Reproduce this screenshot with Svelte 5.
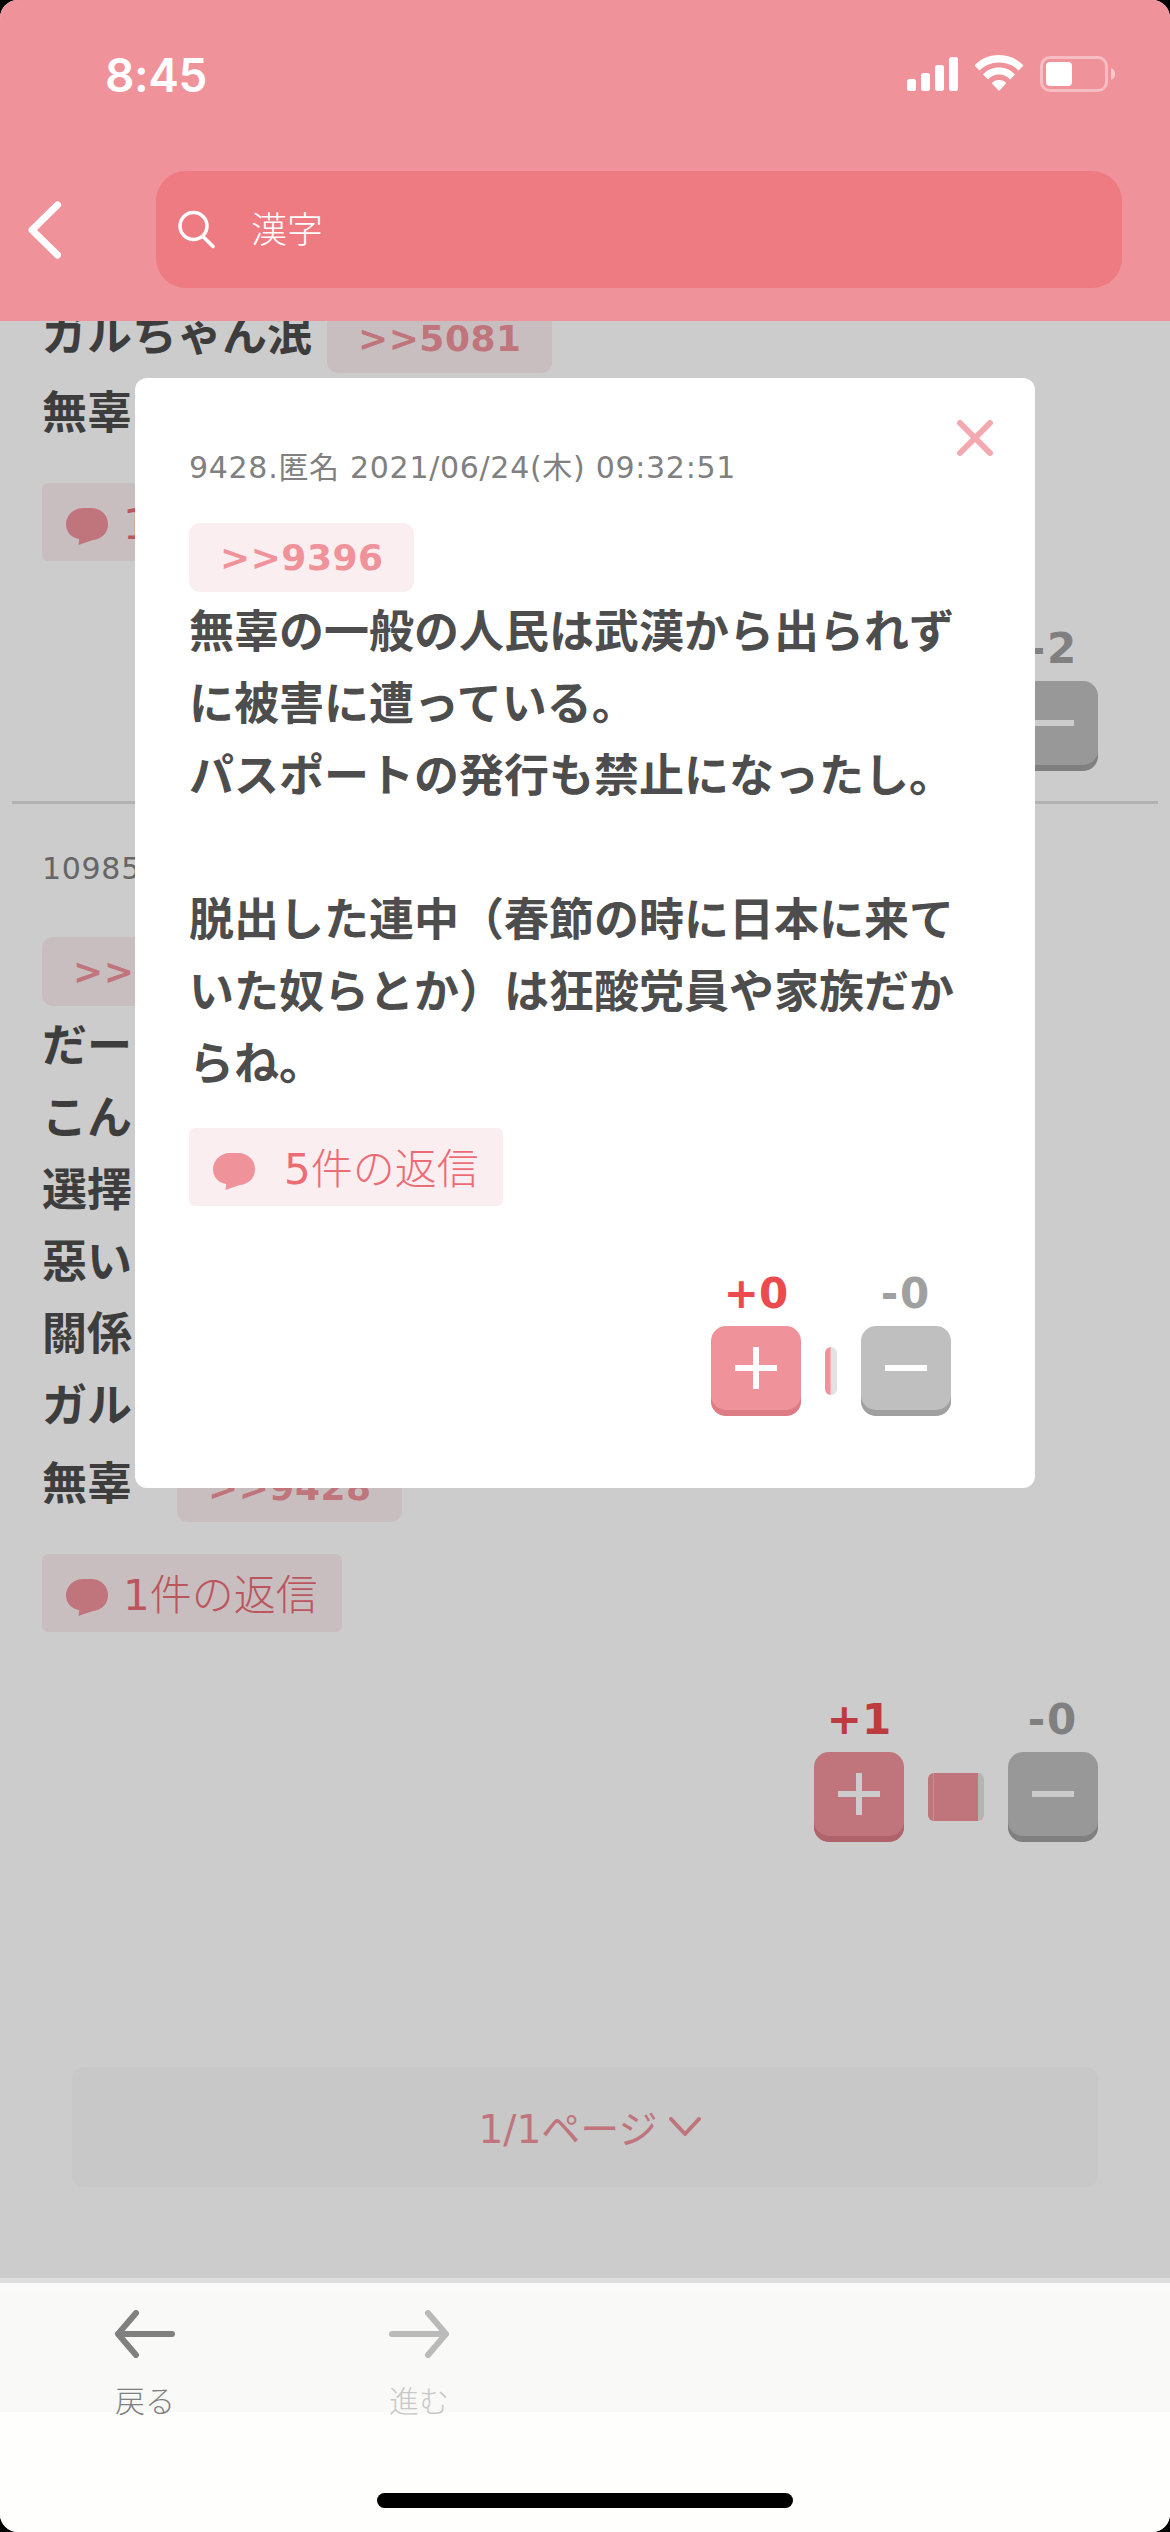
<script>
  let modalOpen = true;

  const comments = [
    {
      lines: [
        { text: 'ガルちゃん泯', tag: '>>5081' },
        { text: '無辜', tagged: true },
      ],
      replies: 1,
      votes: { minus: 2 },
    },
    {
      meta: '10985',
      anchor: '>>',
      lines: [
        { text: 'だー' },
        { text: 'こん' },
        { text: '選擇' },
        { text: '惡い' },
        { text: '關係' },
        { text: 'ガル' },
        { text: '無辜', tag: '>>9428', wide: true },
      ],
      replies: 1,
      votes: { plus: 1, minus: 0, bar: 45 },
    },
  ];

  const selected = {
    meta: '9428.匿名 2021/06/24(木) 09:32:51',
    anchor: '>>9396',
    lines: [
      { text: '無辜の一般の人民は武漢から出られず' },
      { text: 'に被害に遭っている。' },
      { text: 'パスポートの発行も禁止になったし。' },
      { text: '' },
      { text: '脱出した連中（春節の時に日本に来て' },
      { text: 'いた奴らとか）は狂酸党員や家族だか' },
      { text: 'らね。' },
    ],
    replies: 5,
    votes: { plus: 0, minus: 0, bar: 1 },
  };
</script>

{#snippet commentBody(comment)}
  {#if comment.meta}
    <div class="meta">{comment.meta}</div>
  {/if}
  {#if comment.anchor}
    <div class="tag">{comment.anchor}</div>
  {/if}
  <div class="text">
    {#each comment.lines as line}
      <div class="line" class:tagged={line.tag || line.tagged}>
        <span>{line.text}</span>
        {#if line.tag}
          <span class="tag {line.wide ? 'wide' : ''}">{line.tag}</span>
        {/if}
      </div>
    {/each}
  </div>
  <button class="replies">
    <svg width="42" height="37" viewBox="0 0 42 37" fill="currentColor">
      <path d="M17 0h8C35 0 42 7 42 16S36 31 27 32c-5 1.500-10 3.500-14.500 5l.7-6C5 29.500 0 24 0 16S7 0 17 0z"/>
    </svg>
    <span class="label"><b>{comment.replies}</b>件の返信</span>
  </button>
  <div class="votes">
    {#if comment.votes.plus !== undefined}
      <div class="vote plus">
        <div class="count">+{comment.votes.plus}</div>
        <button class="vote-btn">
          <svg width="42" height="42" viewBox="0 0 42 42" fill="#fff">
            <rect x="0" y="18" width="42" height="6"/><rect x="18" y="0" width="6" height="42"/>
          </svg>
        </button>
      </div>
      <div class="ratio">
        <div class="ratio-start"></div>
        <div class="ratio-fill" style="width: {comment.votes.bar}px"></div>
        <div class="ratio-end"></div>
      </div>
    {/if}
    <div class="vote minus">
      <div class="count">-{comment.votes.minus}</div>
      <button class="vote-btn">
        <svg width="42" height="42" viewBox="0 0 42 42" fill="#fff">
          <rect x="0" y="18" width="42" height="6"/>
        </svg>
      </button>
    </div>
  </div>
{/snippet}

<div class="screen">
  <!-- Header -->
  <header>
    <div class="status-bar">
      <div class="time">8:45</div>
      <div class="status-icons">
        <svg width="51" height="34" viewBox="0 0 51 34" fill="#fff">
          <rect x="0" y="22" width="9" height="12" rx="2.500"/><rect x="14" y="16" width="9" height="18" rx="2.500"/>
          <rect x="28" y="8" width="9" height="26" rx="2.500"/><rect x="42" y="0" width="9" height="34" rx="2.500"/>
        </svg>
        <svg class="wifi" width="50" height="36" viewBox="0 0 50 36" fill="#fff">
          <path d="M25 0C35 0 43.500 4 49.500 10.500L44.500 15.500C39.500 10.500 33 7.500 25 7.500S10.500 10.500 5.500 15.500L.5 10.500C6.500 4 15 0 25 0z"/>
          <path d="M25 12.500c6.500 0 12 2.600 16 7l-5 5c-3-3.200-6.600-5-11-5s-8 1.800-11 5l-5-5c4-4.400 9.500-7 16-7z"/>
          <path d="M25 25c3 0 5.500 1.200 7.200 3.200L25 36l-7.200-7.800C19.500 26.200 22 25 25 25z"/>
        </svg>
        <svg width="76" height="36" viewBox="0 0 76 36">
          <rect x="1.500" y="1.500" width="65" height="33" rx="8.500" fill="none" stroke="#fff" stroke-opacity=".4" stroke-width="3"/>
          <rect x="6" y="6" width="26" height="24" rx="4" fill="#fff"/>
          <path d="M71 12c2.700 1.200 4.200 3.400 4.200 6s-1.500 4.800-4.200 6z" fill="#fff" fill-opacity=".5"/>
        </svg>
      </div>
    </div>
    <div class="nav">
      <svg class="back" width="34" height="58" viewBox="0 0 34 58" fill="none" stroke="#fff" stroke-width="7" stroke-linecap="round" stroke-linejoin="round">
        <path d="M29.500 4L4 29l25.500 25"/>
      </svg>
      <div class="search">
        <svg width="38" height="39" viewBox="0 0 38 39" fill="none" stroke="#fff" stroke-width="3.500" stroke-linecap="round">
          <circle cx="15.500" cy="16" r="13.500"/><path d="M25.500 27l9.500 9.500"/>
        </svg>
        <span>漢字</span>
      </div>
    </div>
  </header>

  <!-- Comment list -->
  <main>
    <div class="list">
      {#each comments as comment}
        <article>{@render commentBody(comment)}</article>
      {/each}
      <button class="pager">
        <span>1/1ページ</span>
        <svg width="32" height="26" viewBox="0 0 32 26" fill="none" stroke="currentColor" stroke-width="4" stroke-linecap="round" stroke-linejoin="round">
          <path d="M2 2l14 15L30 2"/>
        </svg>
      </button>
    </div>
    {#if modalOpen}
      <div class="backdrop">
        <div class="modal">
          <button class="close" aria-label="閉じる" on:click={() => modalOpen = false}>
            <svg width="38" height="38" viewBox="0 0 38 38" fill="none" stroke="currentColor" stroke-width="6" stroke-linecap="round">
              <path d="M4 4l30 30M34 4L4 34"/>
            </svg>
          </button>
          {@render commentBody(selected)}
        </div>
      </div>
    {/if}
  </main>

  <!-- Bottom toolbar -->
  <footer>
    <div class="tabs">
      <div class="tab">
        <svg width="60" height="48" viewBox="0 0 60 48" fill="none" stroke="currentColor" stroke-width="6" stroke-linecap="round" stroke-linejoin="round">
          <path d="M57 24H3M21 3L3 24l18 21"/>
        </svg>
        <span>戻る</span>
      </div>
      <div class="tab disabled">
        <svg width="60" height="48" viewBox="0 0 60 48" fill="none" stroke="currentColor" stroke-width="6" stroke-linecap="round" stroke-linejoin="round">
          <path d="M3 24h54M39 3l18 21-18 21"/>
        </svg>
        <span>進む</span>
      </div>
    </div>
    <div class="home-indicator"></div>
  </footer>
</div>

<style>
  :global(body) { background: #000; }

  button {
    border: none;
    padding: 0;
    font: inherit;
    cursor: pointer;
  }

  svg { display: block; flex: none; }

  .screen {
    width: 1170px;
    height: 2532px;
    box-sizing: border-box;
    display: flex;
    flex-direction: column;
    overflow: hidden;
    border-radius: 18px;
    background: #fff;
    font-family: 'DejaVu Sans', 'Noto Sans CJK JP', sans-serif;
  }

  header {
    flex: none;
    height: 321px;
    background: #f0929a;
  }

  .status-bar {
    height: 171px;
    display: flex;
    justify-content: space-between;
    align-items: flex-start;
    padding: 55px 54px 0 105px;
    box-sizing: border-box;
  }

  .time {
    font-family: Inter, sans-serif;
    font-size: 46px;
    font-weight: 600;
    line-height: 40px;
    letter-spacing: -.4px;
    color: #fff;
  }

  .status-icons {
    display: flex;
    align-items: center;
    gap: 16px;
    padding-top: 1px;
  }

  .wifi { margin-top: -2px; }

  .nav {
    display: flex;
    align-items: center;
    padding: 0 48px 0 28px;
  }

  .search {
    flex: 1;
    height: 117px;
    margin-left: 94px;
    padding-left: 22px;
    border-radius: 30px;
    background: #ee7a82;
    display: flex;
    align-items: center;
    gap: 35px;
    box-sizing: border-box;
    font-size: 36px;
    font-weight: 300;
    color: #fff;
  }

  .search span {
    font-family: 'Noto Sans CJK JP', sans-serif;
    line-height: 40px;
    padding-bottom: 5px;
  }

  main {
    flex: 1;
    position: relative;
    overflow: hidden;
  }

  /* scrolled so that the first line sits partly under the header */
  .list { margin-top: -29px; }

  article { padding: 0 72px 0 42px; }

  article + article { margin-top: 30px; }

  article + article::before {
    content: '';
    display: block;
    height: 3px;
    margin: 0 -60px 47px -30px;
    background: #dfdfdf;
  }

  .meta {
    font-size: 30px;
    line-height: 36px;
    letter-spacing: .7px;
    margin-bottom: 50px;
    color: #808080;
    white-space: nowrap;
  }

  .tag {
    display: block;
    flex: none;
    width: 225px;
    height: 69px;
    padding-left: 31px;
    box-sizing: border-box;
    border-radius: 11px;
    background: #fbeef0;
    font-size: 36px;
    font-weight: 700;
    line-height: 70px;
    letter-spacing: .5px;
    color: #f0929a;
  }

  .tag + .text { margin-top: 3px; }

  .text {
    font-family: 'Noto Sans CJK JP', sans-serif;
    font-size: 45px;
    font-weight: 700;
    line-height: 68px;
    color: #4d4d4d;
    white-space: nowrap;
  }

  .line {
    height: 72px;
    display: flex;
    align-items: flex-start;
  }

  .line.tagged { padding-top: 6px; }

  .line .tag {
    margin: 6px 0 0 15px;
    font-family: 'DejaVu Sans', sans-serif;
    line-height: 70px;
  }

  .line .tag.wide { margin-left: 45px; }

  .replies {
    height: 78px;
    margin-top: 29px;
    padding: 0 24px;
    border-radius: 6px;
    background: #fbeef0;
    display: flex;
    align-items: center;
    gap: 15px;
    font-size: 42px;
    font-weight: 300;
    line-height: 72px;
    color: #ec6c75;
  }

  .replies svg {
    color: #f0929a;
    margin-top: 9px;
  }

  .replies .label { padding-top: 6px; }
  .replies b { font-weight: 400; }

  article .replies { margin-top: 35px; }

  .votes {
    display: flex;
    justify-content: flex-end;
    align-items: flex-start;
    gap: 24px;
    margin-top: 63px;
  }

  .vote { width: 90px; }

  .count {
    height: 48px;
    margin-bottom: 9px;
    display: flex;
    justify-content: center;
    font-size: 42px;
    font-weight: 700;
    line-height: 50px;
  }

  .plus .count { color: #eb4a4e; }

  .minus .count {
    color: #a0a0a0;
    letter-spacing: 2px;
  }

  .vote-btn {
    width: 90px;
    height: 90px;
    padding-top: 21px;
    border-radius: 15px;
    display: flex;
    justify-content: center;
    align-items: flex-start;
    box-sizing: border-box;
  }

  .plus .vote-btn {
    background: #f0929a;
    box-shadow: inset 0 -6px 0 #dd7c85;
  }

  .minus .vote-btn {
    background: #bfbfbf;
    box-shadow: inset 0 -6px 0 #a0a0a0;
  }

  .ratio {
    height: 48px;
    margin-top: 78px;
    display: flex;
    overflow: hidden;
    border-radius: 6px;
  }

  .ratio-start { width: 5px; background: #f0929a; }

  .ratio-fill {
    border-left: 1px solid #f5b4ba;
    box-sizing: border-box;
    background: #f0929a;
  }

  .ratio-end { width: 6px; background: #e2e2e2; }

  .pager {
    width: 1026px;
    height: 120px;
    margin: 225px auto 0 72px;
    border-radius: 12px;
    background: #fafafa;
    display: flex;
    justify-content: center;
    align-items: center;
    gap: 11px;
    padding-left: 9px;
    font-size: 39px;
    font-weight: 400;
    color: #f0929a;
    box-sizing: border-box;
  }

  .pager span {
    line-height: 60px;
    padding-top: 5px;
  }

  .pager svg { margin-top: 5px; }

  .backdrop {
    position: absolute;
    inset: 0;
    background: rgba(0, 0, 0, .2);
  }

  .modal {
    position: relative;
    width: 900px;
    height: 1110px;
    margin: 57px auto 0;
    padding: 72px 84px 72px 54px;
    box-sizing: border-box;
    border-radius: 12px;
    background: #fff;
  }

  .modal .meta { margin-bottom: 37px; }
  .modal .replies { gap: 29px; }

  .close {
    position: absolute;
    top: 41px;
    right: 41px;
    background: none;
    color: #f4a8af;
  }

  footer {
    flex: none;
    height: 254px;
    box-sizing: border-box;
    border-top: 5px solid #dedede;
    background: linear-gradient(#fafafa 9px, #f9f9f7 9px, #f9f9f7 129px, #fefefc 129px);
  }

  .tabs {
    height: 210px;
    display: flex;
    gap: 214px;
    padding: 27px 0 0 115px;
    box-sizing: border-box;
  }

  .tab {
    width: 60px;
    display: flex;
    flex-direction: column;
    align-items: center;
    gap: 21px;
    font-family: 'Noto Sans CJK JP', sans-serif;
    font-size: 30px;
    font-weight: 300;
    line-height: 40px;
    color: #808080;
    white-space: nowrap;
  }

  .tab.disabled { color: #bababa; }
  .tab.disabled span { color: #c8c8c8; }

  .home-indicator {
    width: 416px;
    height: 15px;
    margin: 0 auto;
    border-radius: 8px;
    background: #000;
  }
</style>
